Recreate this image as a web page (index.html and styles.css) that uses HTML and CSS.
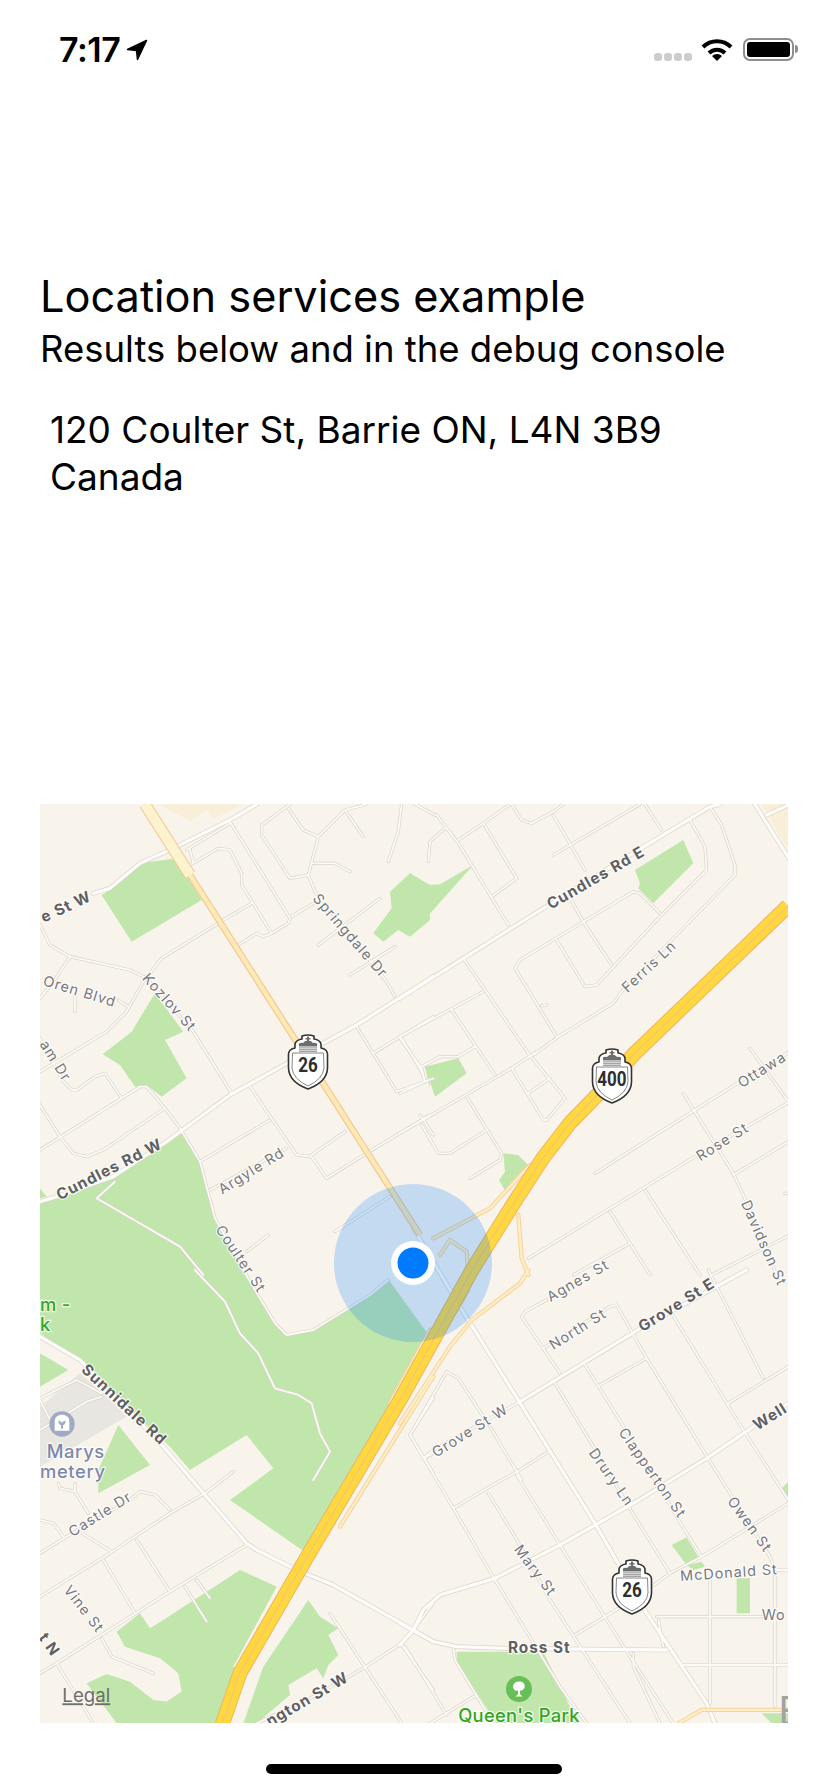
FILE: index.html
```html
<!DOCTYPE html>
<html>
  <head>
    <meta charset="utf-8">
    <meta name="viewport" content="width=device-width, initial-scale=1.0">
    <title>Location services example</title>
    <link rel="stylesheet" href="styles.css">
  </head>
  <body>
    <div class="screen">
      <div class="status-bar">
        <div class="status-left">
          <span class="clock">7:17</span>
          <svg class="arrow" width="22" height="22" viewBox="0 0 22 22"><path d="M20.5 1.5 L1.5 10.5 L10.5 11.5 L11.5 20.5 Z"/></svg>
        </div>
        <div class="status-right">
          <div class="signal"><i></i><i></i><i></i><i></i></div>
          <svg class="wifi" width="32" height="23" viewBox="0 0 32 23">
            <path class="wifi-arc" d="M2 9 A20 20 0 0 1 30 9"/>
            <path class="wifi-arc" d="M8 15 A11.5 11.5 0 0 1 24 15"/>
            <path d="M16 23 L11 18 A7 7 0 0 1 21 18 Z"/>
          </svg>
          <div class="battery"><div class="battery-level"></div></div>
        </div>
      </div>

      <div class="intro">
        <h1>Location services example</h1>
        <p class="subtitle">Results below and in the debug console</p>
        <p class="address">120 Coulter St, Barrie ON, L4N 3B9<br>Canada</p>
      </div>

      <svg class="map" width="748" height="919" viewBox="40 804 748 919">
        <defs>
          <g id="minor">
            <!-- top left -->
            <g transform="translate(30 795) scale(.3333)">
              <path d="M600 80 L780 370 L775 385 L725 415 L700 425 L680 415 L625 450"/>
              <path d="M470 165 L600 85 M480 210 L565 160 L600 165 L635 235 L635 270 L725 415 M480 165 L490 205"/>
              <path d="M780 28 L695 90 L695 120 L780 250 L835 240 L865 125 L945 45 L1010 28 M945 45 L1000 125 M775 40 L820 105 L865 125 M845 205 L915 205 L960 230"/>
              <path d="M835 240 L855 290 L1070 560 L1095 605 M1115 28 L1105 110 L1075 200 M1050 310 L865 450 M960 540 L1095 455 M785 365 L850 325"/>
              <path d="M580 375 L665 325 M395 490 L565 385 M395 490 L340 560 L290 650 L230 710 L30 830"/>
              <path d="M30 390 L60 450 L120 485 L300 525 L340 545 M120 485 L70 560 L30 610 M265 615 L295 635 M135 600 L135 650 M345 545 L490 710 L605 895"/>
              <path d="M30 930 L90 1025 L130 1075 L170 1085 L220 1065 L405 940 M30 1065 L330 875 L350 875 L405 940 L450 1000 L510 1100 L555 1270 L650 1440"/>
              <path d="M30 730 L100 860 L125 885 L140 885 L195 845 L225 835 L275 910"/>
              <path d="M660 875 L800 1080 L845 1085 L890 1150 L1010 1075 L1200 960 M510 1100 L720 975 M845 1080 L945 1010 M540 1185 L770 1060 M650 1370 L715 1320"/>
              <path d="M980 695 L1100 890 L1185 860 L1210 850 M1030 775 L1210 665 M1115 730 L1175 830 L1185 860 M1170 960 L1210 1020"/>
              <path d="M200 1210 L450 1355 L520 1440 M200 1210 L255 1160 M915 1310 L1080 1205"/>
            </g>
            <!-- top right -->
            <g transform="translate(400 795) scale(.3333)">
              <path d="M110 60 L175 145 L325 390 M45 28 L105 60 M175 135 L250 85 L330 28 M250 85 L350 250 L275 305 M135 100 L90 140 L85 200"/>
              <path d="M335 28 L365 75 L395 85 L460 50 L490 28 M460 60 L555 225 M510 310 L550 380 L635 510 M460 180 L720 28 M735 28 L785 105"/>
              <path d="M345 520 L470 725 M345 520 L360 495 L700 290 L720 295 L780 355 M470 435 L555 575 L590 570 L780 365 L920 225 L915 155 L870 75"/>
              <path d="M475 725 L640 625 L665 590 L830 420 L1005 240 L1005 210 L965 90 L930 35 M425 632 L440 630"/>
              <path d="M190 490 L385 775 L495 910 L440 975 L430 975 L335 820 M400 780 L475 725 M0 1015 L335 820 L410 770 M385 895 L450 850"/>
              <path d="M0 725 L250 590 M155 645 L285 840 M0 730 L65 820 L75 860 L0 895 M65 815 L120 785 L175 785 L225 755 M200 905 L305 1075 L300 1095 L210 1150 M65 990 L115 1075 L150 1075 L260 1005"/>
              <path d="M585 1135 L1020 860 L1170 770 M1050 760 L1165 920 M850 895 L1000 1135 L1030 1200 L1130 1440 M385 1390 L885 1085 L1170 920 M1000 1140 L1165 1040"/>
              <path d="M630 1250 L750 1440 M735 1185 L900 1440 M935 1440 L1170 1320 M1155 1195 L1170 1195 M520 1440 L690 1345"/>
            </g>
            <!-- bottom left -->
            <g transform="translate(30 1270) scale(.3333)">
              <path d="M495 0 L585 95 L630 190 L685 250 L735 355 L805 375 L845 400 L870 490 L900 545 L850 630"/>
              <path d="M640 0 L690 85 L735 160 L770 195 L850 180 L1020 75 L1075 30"/>
              <path d="M30 850 L110 800 L300 690 L330 665 L375 675 L420 720 M420 730 L525 670 L610 605 M30 980 L240 850 L420 730 M30 750 L70 760 L100 800 M140 780 L245 845"/>
              <path d="M220 870 L315 1030 M320 810 L420 965 M30 1210 L80 1180 L230 1085 L420 965 L650 825 M465 950 L530 1055 M500 930 L540 985"/>
              <path d="M80 1180 L190 1360 M215 1105 L245 1160 L370 1210 M85 640 L90 655 L135 665 L135 640 M135 665 L175 730 M30 385 L140 330 L215 370 M30 480 L170 395 L215 380 M30 390 L70 470"/>
              <path d="M1150 1085 L1100 1130 L1000 1195 L860 1275 L680 1360 M900 1030 L1115 1360 M1115 1125 L1210 1260 M1210 1000 L1150 1080"/>
              <path d="M1140 495 L1210 385 M1140 495 L1210 610 M1185 565 L1210 550"/>
            </g>
            <!-- bottom right -->
            <g transform="translate(400 1270) scale(.3333)">
              <path d="M440 90 L375 125 L365 140 L480 310 M430 235 L630 110 L650 105 L740 265 L915 550 L990 670 L1110 860 L1125 900 M815 130 L1030 480 L1165 690 M925 0 L1090 325 M985 400 L1165 290"/>
              <path d="M140 305 L30 495 L160 715 L285 930 L480 1250 L560 1360 M140 305 L175 325 L270 470 L365 630 M70 565 L100 540 L360 395"/>
              <path d="M465 340 L580 530 L695 725 L810 910 M555 285 L665 460 L845 765 L905 860 M600 345 L740 265"/>
              <path d="M445 545 L360 600 L270 650 L160 715 M265 670 L345 800 L450 990 L690 1360 M350 615 L480 825 L620 1050 L690 1160 L820 1360"/>
              <path d="M1165 700 L905 860 L810 910 L755 950 L640 1025 L525 1095 M775 1050 L790 1130 M840 1185 L1165 1185 M930 925 L930 1300 M1125 920 L1125 1310 M1120 900 L1170 900"/>
              <path d="M15 1130 L140 1335 M160 1135 L165 1170 L280 1360 M90 1360 L230 1275 M700 1150 L700 1190 L780 1360 M770 1040 L1090 1040"/>
            </g>
          </g>
          <g id="major">
            <g transform="translate(30 795) scale(.3333)">
              <path d="M190 295 L240 280 L330 205 L430 160 L600 75 L680 28"/>
              <path d="M30 1220 L80 1205 L250 1145 L410 1040 L600 900 L780 800 L980 690 L1210 545"/>
              <path d="M1150 1300 L1314 1575"/>
            </g>
            <g transform="translate(400 795) scale(.3333)">
              <path d="M0 610 L190 490 L430 340 L740 150 L930 35 L960 28"/>
              <path d="M1065 28 L1170 195 M1100 60 L1170 28"/>
            </g>
            <g transform="translate(30 1270) scale(.3333)">
              <path d="M30 200 L150 270 L400 530 L650 820 L680 840 L800 900 L910 945 L1150 1080 L1210 1115"/>
            </g>
            <g transform="translate(400 1270) scale(.3333)">
              <path d="M205 150 L585 760 L740 1030 L920 1300 L945 1360"/>
              <path d="M1165 400 L1060 470 L920 565 L700 700 L480 825 L285 925 L120 975 L70 1020 L40 1080 L0 1125"/>
              <path d="M0 1060 L100 1115 L170 1130 L320 1135 L800 1140"/>
              <path d="M1040 0 L730 170 L360 395"/>
            </g>
          </g>
          <g id="ramps">
            <g transform="translate(400 795) scale(.3333)">
              <path d="M355 1260 L365 1390 L385 1440 M100 1330 L270 1240 L390 1110 M120 1380 L150 1335 L200 1370 L205 1440"/>
            </g>
            <g transform="translate(400 1270) scale(.3333)">
              <path d="M385 0 L360 40 L215 150 L150 230 L0 460 M205 60 L170 120 M835 1360 L905 1320 L1170 1320"/>
            </g>
            <g transform="translate(30 1270) scale(.3333)">
              <path d="M1210 320 L930 770 M1200 180 L1080 400"/>
            </g>
          </g>
          <g id="highway">
            <path d="M788 906 L633 1055 L607 1085 L570 1123 L543 1158 L517 1198 L472 1270 L400 1400 L307 1557 L240 1673 L222 1725"/>
          </g>
          <g id="shield">
            <path class="shield-body" d="M-6 -26 Q0 -28 6 -26 L6 -23 Q12 -22 13 -18 L13 -14 Q19 -13 19.5 -8 L19.5 6 Q19 20 0 27 Q-19 20 -19.5 6 L-19.5 -8 Q-19 -13 -13 -14 L-13 -18 Q-12 -22 -6 -23 Z"/>
            <path class="shield-inner" d="M-15.5 -9 L15.5 -9 L16 6 Q15 17 0 24 Q-15 17 -16 6 Z"/>
            <path class="shield-crown" d="M-9 -16 Q-10 -20 -5 -19 Q-2 -22 -1 -21 L-1 -22.5 L-2.5 -22.5 L-2.5 -24 L-1 -24 L-1 -25.5 L1 -25.5 L1 -24 L2.5 -24 L2.5 -22.5 L1 -22.5 L1 -21 Q2 -22 5 -19 Q10 -20 9 -16 Z"/>
            <path class="shield-bands" d="M-9 -15 L9 -15 M-9 -12.8 L9 -12.8 M-9 -10.8 L9 -10.8"/>
          </g>
        </defs>

        <rect class="land" x="40" y="804" width="748" height="919"/>

        <!-- commercial and cemetery blocks -->
        <g transform="translate(30 795) scale(.3333)">
          <polygon class="tan" points="385,28 640,28 550,72 530,45 480,78"/>
          <polygon class="park" points="215,300 240,285 330,205 440,190 515,315 305,440"/>
          <polygon class="park" points="375,595 305,710 218,778 270,810 315,875 350,870 395,905 470,850 405,735 460,710"/>
          <polygon class="park" points="1140,235 1080,290 1085,340 1030,415 1060,440 1105,405 1140,425 1200,375 1200,270"/>
          <polygon class="park" points="1185,815 1200,810 1200,880"/>
          <polygon class="park" points="30,1180 50,1205 30,1210"/>
          <polygon class="park" points="30,1225 80,1210 250,1150 455,1015 510,1100 550,1270 650,1440 30,1440"/>
        </g>
        <g transform="translate(400 795) scale(.3333)">
          <polygon class="tan" points="1085,28 1165,28 1165,165 1105,65"/>
          <polygon class="park" points="0,270 30,235 85,270 120,268 220,210 30,423 0,400"/>
          <polygon class="park" points="850,135 880,205 760,325 715,280 720,265 705,225"/>
          <polygon class="park" points="75,815 175,790 200,835 105,905"/>
          <polygon class="park" points="310,1075 355,1080 390,1115 320,1195 297,1155 315,1130"/>
        </g>
        <g transform="translate(30 1270) scale(.3333)">
          <polygon class="park" points="30,0 640,0 690,85 735,160 770,195 850,180 1020,75 1075,28 1200,200 830,850 600,690 730,595 650,495 480,600 420,530 135,265 30,190"/>
          <polygon class="park" points="30,350 115,300 30,250"/>
          <polygon class="grey" points="30,410 150,310 220,370 290,440 30,590"/>
          <polygon class="park" points="265,465 360,585 205,670 205,600"/>
          <polygon class="park" points="330,1030 360,1075 400,1050 630,900 740,950 610,1190 635,1200 580,1320 560,1360 260,1360 170,1240 230,1212 300,1235 370,1290 410,1295 455,1265 445,1210 390,1165 285,1130 260,1085"/>
          <polygon class="park" points="835,990 870,1040 925,1075 895,1095 925,1155 895,1185 880,1225 860,1195 775,1245 780,1275 680,1360 640,1360 700,1190"/>
        </g>
        <g transform="translate(400 1270) scale(.3333)">
          <polygon class="park" points="170,1145 430,1145 510,1310 545,1360 290,1360 170,1175"/>
          <polygon class="park" points="815,825 860,802 895,860 860,885"/>
          <polygon class="park" points="1010,925 1050,925 1050,1030 1010,1030"/>
          <polygon class="park" points="1165,635 1140,660 1165,690"/>
          <polygon class="park" points="1085,1330 1165,1330 1165,1360 1115,1360"/>
          <polygon class="park" points="860,885 905,875 915,890 880,900"/>
        </g>

        <use href="#minor" class="road-case"/>
        <use href="#major" class="major-case"/>
        <use href="#minor" class="road-fill"/>
        <use href="#major" class="major-fill"/>

        <use href="#ramps" class="ramp-case"/>
        <use href="#ramps" class="ramp-fill"/>

        <!-- hwy 26 -->
        <g transform="translate(30 795) scale(.3333)">
          <path class="hwy26-wide-case" d="M345 28 L480 240"/>
          <path class="hwy26-case" d="M480 240 L1170 1320"/>
          <path class="hwy26-wide" d="M345 28 L480 240"/>
          <path class="hwy26-fill" d="M480 240 L1170 1320"/>
        </g>

        <use href="#highway" class="hwy-case"/>
        <use href="#highway" class="hwy-fill"/>
        <use href="#highway" class="hwy-line"/>

        <!-- labels -->
        <g class="labels" transform="translate(30 795) scale(.3333)">
          <text class="bold" text-anchor="end" transform="translate(188 315) rotate(-25)">e St W</text>
          <text class="bold" transform="translate(245 1137) rotate(-27)">Cundles Rd W</text>
          <text transform="translate(950 432) rotate(49)">Springdale Dr</text>
          <text transform="translate(145 603) rotate(17)">Oren Blvd</text>
          <text transform="translate(407 632) rotate(48)">Kozlov St</text>
          <text text-anchor="end" transform="translate(100 863) rotate(58)">am Dr</text>
          <text transform="translate(672 1140) rotate(-32)">Argyle Rd</text>
          <text transform="translate(620 1400) rotate(56)">Coulter St</text>
        </g>
        <g class="labels" transform="translate(400 795) scale(.3333)">
          <text class="bold" transform="translate(595 262) rotate(-30)">Cundles Rd E</text>
          <text transform="translate(757 525) rotate(-43)">Ferris Ln</text>
          <text text-anchor="start" transform="translate(1025 880) rotate(-32)">Ottawa</text>
          <text transform="translate(975 1053) rotate(-32)">Rose St</text>
          <text text-anchor="start" transform="translate(1022 1224) rotate(66)">Davidson St</text>
        </g>
        <g class="labels" transform="translate(400 1270) scale(.3333)">
          <text transform="translate(541 45) rotate(-30)">Agnes St</text>
          <text transform="translate(541 190) rotate(-32)">North St</text>
          <text class="bold" transform="translate(838 118) rotate(-32)">Grove St E</text>
          <text transform="translate(218 495) rotate(-32)">Grove St W</text>
          <text transform="translate(745 617) rotate(55)">Clapperton St</text>
          <text transform="translate(622 630) rotate(55)">Drury Ln</text>
          <text transform="translate(1037 772) rotate(54)">Owen St</text>
          <text transform="translate(394 910) rotate(53)">Mary St</text>
          <text transform="translate(988 923) rotate(-4)">McDonald St</text>
          <text text-anchor="start" transform="translate(1085 1050)">Wo</text>
          <text class="bold" text-anchor="start" transform="translate(1072 482) rotate(-32)">Well</text>
          <text class="bold" transform="translate(418 1150)">Ross St</text>
          <text class="green-label" transform="translate(357 1355)">Queen's Park</text>
          <circle class="park-pin" cx="357" cy="1257" r="39"/>
          <path class="white-shape" d="M357 1235 C372 1233 380 1250 370 1258 C364 1263 361 1262 360 1262 L360 1273 L368 1280 L346 1280 L354 1273 L354 1262 C350 1263 345 1262 341 1257 C335 1246 345 1233 357 1235 Z"/>
          <text class="edge-e" text-anchor="start" transform="translate(1135 1365)">E</text>
        </g>
        <g class="labels" transform="translate(30 1270) scale(.3333)">
          <text class="bold" transform="translate(272 415) rotate(43)">Sunnidale Rd</text>
          <text transform="translate(218 745) rotate(-32)">Castle Dr</text>
          <text transform="translate(150 1026) rotate(52)">Vine St</text>
          <text class="bold" text-anchor="end" transform="translate(66 1162) rotate(55)">t N</text>
          <text class="bold" text-anchor="end" transform="translate(960 1232) rotate(-30)">ngton St W</text>
          <text class="green-label" text-anchor="start" x="30" y="124">m -</text>
          <text class="green-label" text-anchor="start" x="30" y="184">k</text>
          <circle class="grave-pin" cx="96" cy="462" r="38"/>
          <path class="white-shape" d="M74 482 L74 455 C74 440 84 434 96 434 C108 434 118 440 118 455 L118 482 Z"/>
          <path class="grave-mark" d="M96 466 C88 466 85 460 85 452 C90 452 93 454 96 458 C99 454 102 452 107 452 C107 460 104 466 96 466 Z M93 466 L99 466 L99 476 L93 476 Z"/>
          <text class="blue-label" text-anchor="start" x="50" y="564">Marys</text>
          <text class="blue-label" text-anchor="start" x="30" y="624">metery</text>
          <text class="legal" text-anchor="start" x="97" y="1297">Legal</text>
        </g>

        <!-- route shields -->
        <use href="#shield" x="308" y="1062"/>
        <use href="#shield" x="612" y="1076"/>
        <use href="#shield" x="632" y="1587"/>
        <text class="shield-num" transform="translate(308 1072) scale(.85 1)">26</text>
        <text class="shield-num" transform="translate(612 1086) scale(.85 1)">400</text>
        <text class="shield-num" transform="translate(632 1597) scale(.85 1)">26</text>

        <!-- user location -->
        <circle class="accuracy" cx="413" cy="1263" r="79"/>
        <circle class="dot-ring" cx="413" cy="1263" r="22"/>
        <circle class="dot" cx="413" cy="1263" r="15.5"/>
      </svg>

      <div class="home-row"><div class="home-bar"></div></div>
    </div>
  </body>
</html>
```

FILE: styles.css
```css
html, body {
  margin: 0;
  padding: 0;
  background-color: #fff;
}

.screen {
  width: 828px;
  height: 1792px;
  overflow: hidden;
  font-family: Inter, "Liberation Sans", sans-serif;
  color: #000;
}

/* status bar */
.status-bar {
  height: 88px;
  padding: 32px 34px 0 59px;
  box-sizing: border-box;
  display: flex;
  justify-content: space-between;
}

.status-left {
  display: flex;
  align-items: flex-start;
  gap: 6px;
}

.clock {
  font-size: 34px;
  font-weight: 600;
  line-height: 36px;
  letter-spacing: -.5px;
}

.arrow {
  margin-top: 7px;
  stroke: #000;
  stroke-width: 1.5;
  stroke-linejoin: round;
}

.status-right {
  display: flex;
  align-items: flex-start;
}

.signal {
  display: flex;
  gap: 2px;
  margin: 21px 9px 0 0;
}

.signal i {
  width: 8px;
  height: 8px;
  border-radius: 3px;
  background-color: #cdcdcd;
}

.wifi {
  margin: 6px 10px 0 0;
}

.wifi-arc {
  fill: none;
  stroke: #000;
  stroke-width: 4;
}

.battery {
  position: relative;
  width: 51px;
  height: 23px;
  margin-top: 6px;
  padding: 2px;
  box-sizing: border-box;
  border: 2px solid #8e8e8e;
  border-radius: 7px;
}

.battery:after {
  content: "";
  position: absolute;
  right: -6px;
  top: 5px;
  width: 3px;
  height: 8px;
  border-radius: 0 3px 3px 0;
  background-color: #8e8e8e;
}

.battery-level {
  height: 100%;
  border-radius: 3px;
  background-color: #000;
}

/* text block */
.intro {
  margin: 183px 0 0 40px;
}

h1 {
  margin: 0;
  font-size: 43.3px;
  font-weight: 400;
  line-height: 50px;
}

.subtitle {
  margin: 6px 0 0;
  font-size: 36.5px;
  line-height: 44px;
}

.address {
  margin: 35px 0 0 10px;
  font-size: 37px;
  line-height: 47px;
}

/* map */
.map {
  display: block;
  margin: 304px 0 0 40px;
}

.land { fill: #f8f4ec; }
.park { fill: #c0e6ab; }
.grey { fill: #e8e6e1; }
.tan { fill: #f9efd8; }

.road-case, .major-case, .road-fill, .major-fill, .ramp-case, .ramp-fill {
  fill: none;
  stroke-linecap: round;
  stroke-linejoin: round;
}

.road-case { stroke: #d9d3c8; stroke-width: 9.5; }
.road-fill { stroke: #fbfaf7; stroke-width: 5.5; }
.major-case { stroke: #d9d3c8; stroke-width: 14; }
.major-fill { stroke: #fdfcfa; stroke-width: 10; }
.ramp-case { stroke: #f8d29a; stroke-width: 13; }
.ramp-fill { stroke: #fdeec8; stroke-width: 7; }

.hwy26-case, .hwy26-fill, .hwy26-wide, .hwy26-wide-case { fill: none; }
.hwy26-case { stroke: #f5c78c; stroke-width: 20; }
.hwy26-fill { stroke: #fdeab8; stroke-width: 13; }
.hwy26-wide-case { stroke: #f5c78c; stroke-width: 36; }
.hwy26-wide { stroke: #fdf3cf; stroke-width: 30; }

.hwy-case, .hwy-fill, .hwy-line { fill: none; stroke-linejoin: round; }
.hwy-case { stroke: #eeb26c; stroke-width: 15; }
.hwy-fill { stroke: #ffd83e; stroke-width: 13; }
.hwy-line { stroke: #f3c27d; stroke-width: 1.2; }

.labels text {
  font-family: Inter, "Liberation Sans", sans-serif;
  font-size: 43px;
  text-anchor: middle;
  fill: #77777b;
  stroke: #fff;
  stroke-opacity: .8;
  stroke-width: 7px;
  paint-order: stroke;
  letter-spacing: 3px;
}

.labels text[text-anchor="start"] { text-anchor: start; }
.labels text[text-anchor="end"] { text-anchor: end; }

.labels .bold {
  font-size: 46px;
  font-weight: 700;
  fill: #5f5f62;
}

.labels .green-label {
  font-size: 55px;
  font-weight: 500;
  fill: #34a61f;
  letter-spacing: 1px;
}

.labels .blue-label {
  font-size: 55px;
  font-weight: 500;
  fill: #7c88ab;
  letter-spacing: 2px;
}

.labels .legal {
  font-size: 56px;
  fill: #6e6e6e;
  stroke: none;
  text-decoration: underline;
  letter-spacing: 0;
}

.labels .edge-e {
  font-size: 120px;
  fill: #a3a3a3;
  stroke: none;
}

.park-pin { fill: #69bf57; }
.grave-pin { fill: #a0aac4; }
.white-shape { fill: #fff; }
.grave-mark { fill: #a0aac4; }

.shield-body { fill: #fff; stroke: #333; stroke-width: 1.6; stroke-linejoin: round; }
.shield-inner { fill: none; stroke: #555; stroke-width: .7; }
.shield-crown { fill: #6d6d6d; }
.shield-bands { fill: none; stroke: #a5a5a5; stroke-width: 1.4; }

.shield-num {
  font-family: Roboto, "Liberation Sans", sans-serif;
  font-size: 20px;
  font-weight: 700;
  text-anchor: middle;
  fill: #2e2e2e;
}

.accuracy { fill: #007aff; fill-opacity: .21; }
.dot-ring { fill: #fff; }
.dot { fill: #007aff; }

/* home indicator */
.home-row {
  display: flex;
  justify-content: center;
  margin-top: 41px;
}

.home-bar {
  width: 296px;
  height: 10px;
  border-radius: 5px;
  background-color: #000;
}
```
